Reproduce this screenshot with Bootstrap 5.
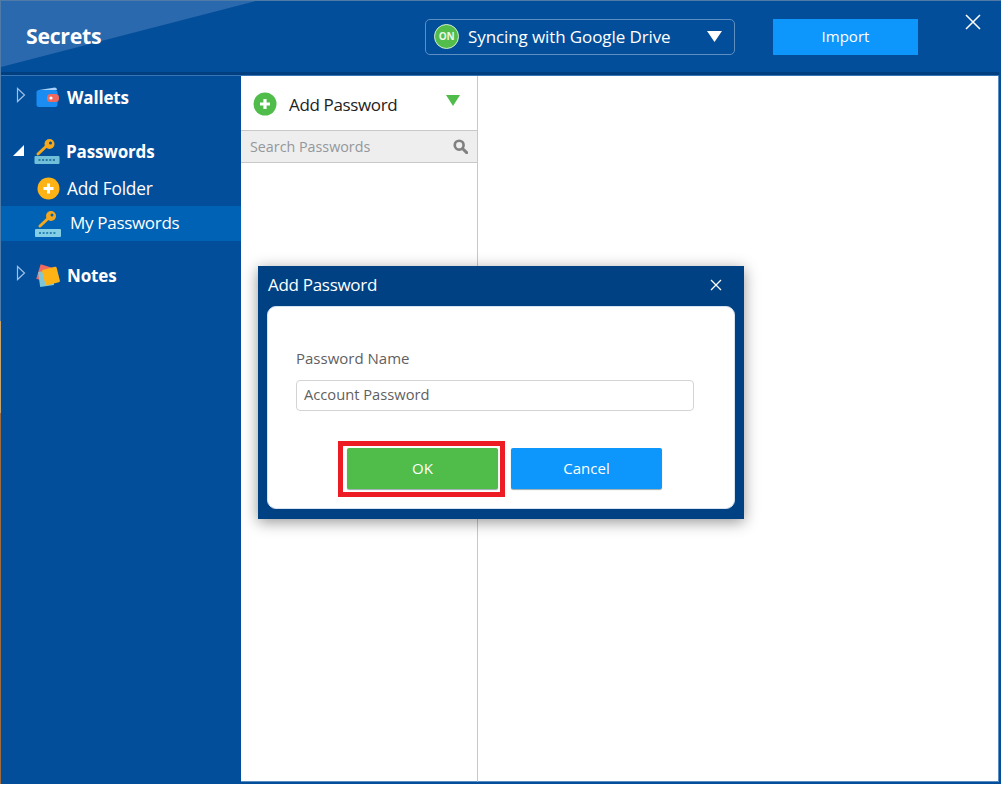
<!DOCTYPE html>
<html lang="en">
<head>
<meta charset="utf-8">
<title>Secrets</title>
<link href="https://cdn.jsdelivr.net/npm/bootstrap@5.3.0/dist/css/bootstrap.min.css" rel="stylesheet">
<style>
html,body{height:100%;background:#fff;overflow:hidden}
body{font-family:"Open Sans","Noto Sans",sans-serif;font-size:16px;color:#222}
.win{width:1001px;height:784px;background:linear-gradient(to bottom,#4f7ba6 0,#4f7ba6 320px,#c9a36a 320px,#c9a36a 412px,#9c6c40 412px) no-repeat left top/1px 100%,#034e9a;border-top:1px solid #4f7ba6;padding:0 2px 2px 1px;position:relative}
.top-bar{height:71px;position:relative;flex:none}
.top-bar>*{position:relative}
.top-bar svg.shine{position:absolute;left:0;top:0}
.brand-txt{font-size:21.3px;font-weight:700;color:#fff;width:424px;padding-left:25px;letter-spacing:-.3px;margin-top:-2px}
.sync-box{width:310px;height:36px;border:1px solid #5e8fc2;border-radius:5px;color:#fff;font-size:17px;padding:0 8px;letter-spacing:-.1px;gap:9px}
.sync-on{width:25px;height:25px;border-radius:50%;background:#52bd4b;border:1px solid #d4ecd0;color:#e9f8e6;font-size:10px;font-weight:700;letter-spacing:-.4px}
.btn-imp{width:145px;height:36px;margin-left:38px;background:#0d96fb;border:0;border-radius:0;color:#fff;font-size:15px;padding:0}
.btn-imp:hover{background:#0d96fb;color:#fff}
.x-close{position:absolute!important;left:963px;top:12px}
.strip{height:4px;background:#023f80;border-bottom:1px solid #3775b5;flex:none}
.main-area{height:706px}
.side{width:240px;flex:none;color:#fff}
.side-row{height:35px;padding-left:15px}
.side-hd{font-weight:700;font-size:17px;letter-spacing:-.15px}
.side-sub{font-size:17.3px;letter-spacing:-.2px}
.side-on{background:#0062b4}
.side-on .mine{font-size:17px;letter-spacing:-.3px;margin:-2px 0 0 3px}
.tw{width:17px;flex:none;margin-top:-5px}
.tw-open{margin-left:-3px;width:20px;margin-top:-3px}
.ico{width:30px;flex:none;margin-right:4px}
.ico-key{margin-left:-1px}
.pad-a{height:4px}.pad-b{height:19px}.pad-d{height:2px}.pad-c{height:17px}
.list-col{width:237px;flex:none;background:#fff;border-right:1px solid #c8c8c8;border-bottom:1px solid #5a8cc2}
.add-row{height:54px;padding:2px 17px 0 12px;font-size:17px;color:#222;letter-spacing:-.35px}
.add-lbl{margin-top:2px}
.find-row{height:33px;background:#eee;border:solid #c8c8c8;border-width:1px 0;padding:0 9px;font-size:14.3px;color:#94979b}
.detail{flex:1;background:#fff;border:solid #5a8cc2;border-width:0 1px 1px 0}
.dlg{position:absolute;left:258px;top:265px;width:486px;height:253px;background:#004184;box-shadow:0 3px 14px rgba(0,0,0,.42);padding:0 9px 9px 9px}
.dlg-hd{height:40px;color:#fff;font-size:17px;margin-left:1px;letter-spacing:-.3px;padding-bottom:2px}
.dlg-close{margin-right:13px}
.dlg-body{height:203px;background:#fff;border:1px solid #d5e2f0;border-radius:9px;padding:41px 40px 0 28px}
.lbl{font-size:15px;color:#5f5f5f;margin-bottom:12px;line-height:20px}
.inp{height:31px;border:1px solid #d4d4d4;border-radius:4px;font-size:14.7px;color:#5f5f5f;padding:0 7px 3px;font-family:inherit}
.inp:focus{border-color:#d4d4d4;box-shadow:none;color:#5f5f5f}
.dlg-btns{margin-top:30px;padding-left:42px;gap:6px}
.hl-box{border:5px solid #ed1c24;padding:2px 2px 3px 4px;background:#fff}
.btn-ok,.btn-can{width:151px;height:41px;border:0;border-radius:2px;color:#fff;font-size:15px;padding:0;box-shadow:0 1px 1px #9aa}
.btn-ok,.btn-ok:hover{background:#50bc4a;color:#fff}
.btn-can,.btn-can:hover{background:#0d96fb;color:#fff;margin-top:7px}
</style>
</head>
<body>
<div class="win d-flex flex-column">
  <header class="top-bar d-flex align-items-center">
    <svg class="shine" width="260" height="68" viewBox="0 0 260 68"><polygon points="0,0 255,0 0,66" fill="#2a69ad"/></svg>
    <div class="brand-txt">Secrets</div>
    <div class="sync-box d-flex align-items-center">
      <span class="sync-on d-flex align-items-center justify-content-center">ON</span>
      <span class="flex-grow-1">Syncing with Google Drive</span>
      <svg width="15" height="11" viewBox="0 0 15 11" class="me-1"><polygon points="0,0 15,0 7.5,11" fill="#fff"/></svg>
    </div>
    <button class="btn btn-imp" type="button">Import</button>
    <svg class="x-close" width="18" height="18" viewBox="0 0 18 18"><path d="M2 2L16 16M16 2L2 16" stroke="#fff" stroke-width="1.5" fill="none"/></svg>
  </header>
  <div class="strip"></div>
  <div class="main-area d-flex">
    <nav class="side">
      <div class="pad-a"></div>
      <div class="side-row side-hd d-flex align-items-center">
        <span class="tw d-flex"><svg width="10" height="16" viewBox="0 0 10 16"><path d="M1.5 1.5L8.5 8L1.5 14.5Z" fill="none" stroke="#9cc0e6" stroke-width="1.2"/></svg></span>
        <span class="ico d-flex justify-content-center"><svg width="24" height="21" viewBox="0 0 24 21"><path d="M3 3L19 0.5Q21 .5 21 3Z" fill="#a9d4f7"/><rect x="0.5" y="3" width="21" height="17" rx="2.5" fill="#1b8cf2"/><rect x="11" y="7" width="12" height="8" rx="3.5" fill="#f0685e"/><circle cx="15" cy="11" r="1.6" fill="#fff"/></svg></span>
        <span>Wallets</span>
      </div>
      <div class="pad-b"></div>
      <div class="side-row side-hd d-flex align-items-center">
        <span class="tw tw-open d-flex"><svg width="12" height="11" viewBox="0 0 12 11"><polygon points="11,0 11,11 0,11" fill="#fff"/></svg></span>
        <span class="ico ico-key d-flex justify-content-center"><svg width="26" height="27" viewBox="0 0 26 27"><path d="M4 16L12 8.5" stroke="#f6a81c" stroke-width="3" stroke-linecap="round"/><circle cx="15.5" cy="6" r="5" fill="#f6a81c"/><circle cx="16.5" cy="5" r="1.5" fill="#034e9a"/><rect x="0.5" y="18" width="25" height="8" rx="1" fill="#72bfd9"/><path d="M4.5 22H21" stroke="#0e5f95" stroke-width="1.4" stroke-dasharray="2 1.6"/></svg></span>
        <span>Passwords</span>
      </div>
      <div class="pad-d"></div>
      <div class="side-row side-sub d-flex align-items-center">
        <span class="tw"></span>
        <span class="ico d-flex justify-content-center"><svg width="23" height="23" viewBox="0 0 23 23"><circle cx="11.5" cy="11.5" r="11" fill="#fdb316"/><path d="M11.5 6.5V16.5M6.5 11.5H16.5" stroke="#fff" stroke-width="3"/></svg></span>
        <span>Add Folder</span>
      </div>
      <div class="side-row side-sub side-on d-flex align-items-center">
        <span class="tw"></span>
        <span class="ico d-flex justify-content-center"><svg width="28" height="28" viewBox="0 0 28 28"><path d="M6 16L14 8.5" stroke="#f6a81c" stroke-width="3" stroke-linecap="round"/><circle cx="17" cy="6" r="5" fill="#f6a81c"/><circle cx="18" cy="5" r="1.5" fill="#0062b4"/><rect x="1" y="19" width="26" height="8" rx="1" fill="#84cfe6"/><path d="M5 23H23" stroke="#0e6fa5" stroke-width="1.4" stroke-dasharray="2 1.6"/></svg></span>
        <span class="mine">My Passwords</span>
      </div>
      <div class="pad-c"></div>
      <div class="side-row side-hd d-flex align-items-center">
        <span class="tw d-flex"><svg width="10" height="16" viewBox="0 0 10 16"><path d="M1.5 1.5L8.5 8L1.5 14.5Z" fill="none" stroke="#9cc0e6" stroke-width="1.2"/></svg></span>
        <span class="ico d-flex justify-content-center"><svg width="26" height="24" viewBox="0 0 26 24"><rect x="3" y="2" width="13" height="15" transform="rotate(17 10 10)" fill="#ef6b62"/><rect x="4" y="7" width="14" height="15" transform="rotate(-8 11 14)" fill="#7fc7d8"/><rect x="8.5" y="4" width="15" height="16" rx="1.5" transform="rotate(-14 16 12)" fill="#fdb316"/></svg></span>
        <span>Notes</span>
      </div>
    </nav>
    <section class="list-col d-flex flex-column">
      <div class="add-row d-flex align-items-center">
        <svg width="24" height="24" viewBox="0 0 24 24" class="me-2"><circle cx="12" cy="12" r="11.5" fill="#50bc4a"/><path d="M12 7V17M7 12H17" stroke="#fff" stroke-width="3.2"/></svg>
        <span class="add-lbl flex-grow-1 ms-1">Add Password</span>
        <svg width="14" height="11" viewBox="0 0 14 11" class="mb-2"><polygon points="0,0 14,0 7,11" fill="#50bc4a"/></svg>
      </div>
      <div class="find-row d-flex align-items-center justify-content-between">
        <span>Search Passwords</span>
        <svg width="15" height="15" viewBox="0 0 17 17"><circle cx="7" cy="7" r="5" fill="none" stroke="#808080" stroke-width="3"/><path d="M11 11L15.5 15.5" stroke="#808080" stroke-width="3.4" stroke-linecap="round"/></svg>
      </div>
    </section>
    <section class="detail"></section>
  </div>
  <div class="dlg" role="dialog">
    <div class="dlg-hd d-flex align-items-center justify-content-between">
      <span>Add Password</span>
      <svg width="12" height="12" viewBox="0 0 12 12" class="dlg-close"><path d="M1 1L11 11M11 1L1 11" stroke="#fff" stroke-width="1.3" fill="none"/></svg>
    </div>
    <div class="dlg-body">
      <label class="lbl form-label d-block" for="pw">Password Name</label>
      <input id="pw" class="form-control inp" type="text" value="Account Password">
      <div class="dlg-btns d-flex align-items-start">
        <div class="hl-box d-flex"><button class="btn btn-ok" type="button">OK</button></div>
        <button class="btn btn-can" type="button">Cancel</button>
      </div>
    </div>
  </div>
</div>
<script src="https://cdn.jsdelivr.net/npm/bootstrap@5.3.0/dist/js/bootstrap.bundle.min.js"></script>
</body>
</html>
